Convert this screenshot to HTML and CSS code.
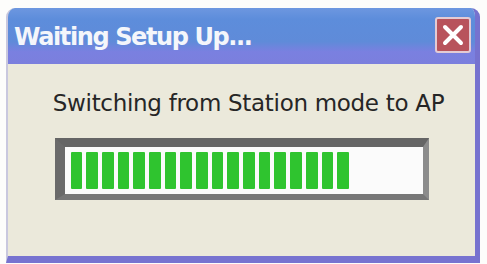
FILE: index.html
```html
<!DOCTYPE html>
<html>
<head>
<meta charset="utf-8">
<link rel="stylesheet" href="styles.css">
</head>
<body>
<div class="window">
  <div class="titlebar">
    <span class="title">Waiting Setup Up...</span>
    <div class="close">
      <svg width="24" height="24" viewBox="0 0 24 24"><path d="M4 4 L20 20 M20 4 L4 20" stroke="#fff" stroke-width="4" stroke-linecap="round"/></svg>
    </div>
  </div>
  <div class="content">
    <p class="message">Switching from Station mode to AP</p>
    <div class="progress">
      <div class="track">
        <span class="blk"></span><span class="blk"></span><span class="blk"></span><span class="blk"></span><span class="blk"></span><span class="blk"></span><span class="blk"></span><span class="blk"></span><span class="blk"></span><span class="blk"></span><span class="blk"></span><span class="blk"></span><span class="blk"></span><span class="blk"></span><span class="blk"></span><span class="blk"></span><span class="blk"></span><span class="blk"></span>
      </div>
    </div>
  </div>
</div>
</body>
</html>
```
FILE: styles.css
```css
html, body { margin: 0; padding: 0; background: #fdfdfb; }
body { width: 487px; height: 264px; overflow: hidden; }
.window {
  margin: 8px 0 0 6px;
  width: 474px;
  height: 255px;
  box-sizing: border-box;
  background: #ebe9db;
  border-radius: 9px 9px 0 0;
  border-right: 5px solid #7672cf;
  border-bottom: 7px solid #7773d0;
  border-left: 2px solid #c9c8de;
  overflow: hidden;
  display: flex;
  flex-direction: column;
}
.titlebar {
  height: 56px;
  flex: none;
  background: linear-gradient(to bottom, #6d97e0 0%, #5d8ddb 20%, #5f8bd9 60%, #7a80e0 78%, #7b7fdd 100%);
  display: flex;
  align-items: center;
  justify-content: space-between;
  padding: 0 4px 0 6px;
}
.title {
  font-family: "DejaVu Sans", sans-serif;
  font-weight: bold;
  font-size: 24px;
  color: #f4f6fb;
  letter-spacing: -1.4px;
  margin-top: 2px;
}
.close {
  width: 36px;
  height: 36px;
  box-sizing: border-box;
  background: #b8535c;
  border: 2px solid #e4cbd4;
  border-radius: 3px;
  display: flex;
  align-items: center;
  justify-content: center;
  margin-top: -2px;
}
.content {
  flex: 1;
  display: flex;
  flex-direction: column;
  align-items: center;
}
.message {
  margin: 26px 0 0 14px;
  font-family: "DejaVu Sans", sans-serif;
  font-size: 23px;
  color: #262626;
  letter-spacing: -0.3px;
}
.progress {
  margin: 22px 0 0 0;
  width: 374px;
  height: 62px;
  box-sizing: border-box;
  background: #fbfbfb;
  border-top: 9px solid #656565;
  border-left: 10px solid #6a6a6a;
  border-right: 6px solid #8c8c8c;
  border-bottom: 6px solid #777;
  padding: 5px 6px;
}
.track {
  display: flex;
  gap: 4px;
  height: 100%;
}
.blk {
  width: 11.7px;
  height: 100%;
  background: #2fc42f;
  border-radius: 1px;
}
```
